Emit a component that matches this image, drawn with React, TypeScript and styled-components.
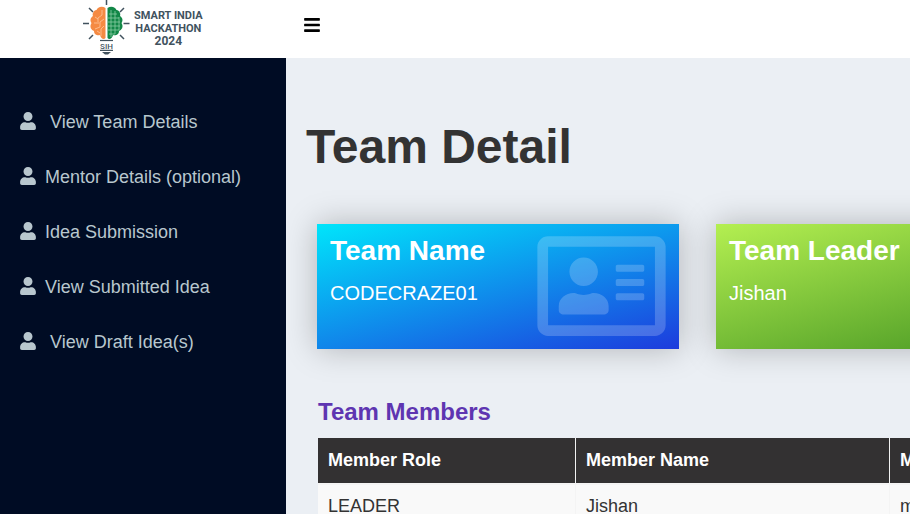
import React from "react";
import styled, { createGlobalStyle } from "styled-components";
import { FaBars, FaRegAddressCard, FaUser } from "react-icons/fa";

const GlobalStyle = createGlobalStyle`
  *, *::before, *::after { box-sizing: border-box; }
  body {
    margin: 0;
    overflow: hidden;
    background: #ebeff4;
    color: #333;
    font-family: "Liberation Sans", Arial, sans-serif;
  }
`;

const Page = styled.div`
  display: flex;
  flex-direction: column;
  height: 100vh;
`;

const TopBar = styled.header`
  display: flex;
  flex: none;
  height: 58px;
  background: #fff;
`;

const Brand = styled.a`
  display: flex;
  flex: none;
  width: 286px;
  padding-left: 80px;
  gap: 4px;
  color: #41525e;
  text-decoration: none;
`;

const BrandName = styled.span`
  display: flex;
  flex-direction: column;
  align-items: center;
  padding-top: 9px;
  font: 700 11px/13px Roboto, sans-serif;
`;

const BrandYear = styled.span`
  font-size: 12px;
`;

const MenuButton = styled.button`
  display: flex;
  align-items: center;
  align-self: flex-start;
  height: 50px;
  margin-left: 18px;
  padding: 0;
  border: 0;
  background: none;
  color: #000;
  font-size: 18px;
  cursor: pointer;

  svg { width: 16px; height: 18px; }
`;

const Body = styled.div`
  display: flex;
  flex: 1;
  min-height: 0;
`;

const Sidebar = styled.nav`
  flex: none;
  width: 286px;
  padding-top: 36px;
  background: #000c24;
`;

const NavList = styled.ul`
  margin: 0;
  padding: 0;
  list-style: none;
`;

const NavLink = styled.a`
  display: flex;
  align-items: flex-start;
  gap: 9px;
  height: 55px;
  padding: 18px 0 0 20px;
  color: #b8c7ce;
  font-size: 18px;
  line-height: 20px;
  text-decoration: none;
  white-space: nowrap;

  svg { width: 16px; height: 18px; }
`;

const Main = styled.main`
  flex: 1;
  min-width: 0;
  padding: 61px 0 0 20px;
  overflow: hidden;
`;

const Title = styled.h1`
  margin: 0;
  font-size: 48px;
  line-height: 56px;
`;

const Cards = styled.section`
  display: grid;
  grid-auto-flow: column;
  grid-auto-columns: 362px;
  gap: 37px;
  margin: 49px 0 0 11px;
`;

const Card = styled.article<{ $from: string; $to: string }>`
  display: flex;
  justify-content: space-between;
  height: 125px;
  padding: 10px 13px;
  background: linear-gradient(165deg, ${(p) => p.$from}, ${(p) => p.$to});
  box-shadow: 0 0 30px rgba(0, 0, 0, 0.25);
  color: #fff;
  white-space: nowrap;

  svg { width: 129px; height: 114px; margin-top: -5px; opacity: 0.2; }
`;

const CardTitle = styled.h2`
  margin: 0;
  font-size: 28px;
  line-height: 34px;
`;

const CardText = styled.p`
  margin: 13px 0 0;
  font-size: 20px;
  line-height: 24px;
`;

const SectionTitle = styled.h3`
  margin: 49px 0 0 12px;
  color: #5e35b1;
  font-size: 24px;
  line-height: 28px;
`;

const Table = styled.table`
  width: 1080px;
  margin: 12px 0 0 12px;
  border-collapse: separate;
  border-spacing: 0;
  table-layout: fixed;
  background: #f9f9f9;
  font-size: 18px;
  line-height: 21px;
  text-align: left;
`;

const Col = styled.col<{ $width?: number }>`
  width: ${(p) => (p.$width ? `${p.$width}px` : "auto")};
`;

const HeadCell = styled.th`
  height: 45px;
  padding: 12px 10px;
  border-right: 1px solid #f2f2f2;
  background: #333132;
  color: #fff;
`;

const Cell = styled.td`
  padding: 11px 10px;
  border-top: 2px solid #f4f4f4;
  border-right: 1px solid #f4f4f4;
`;

const navItems = [
  "\u00a0View Team Details",
  "Mentor Details (optional)",
  "Idea Submission",
  "View Submitted Idea",
  "\u00a0View Draft Idea(s)",
];

const members = [{ role: "LEADER", name: "Jishan", contact: "m" }];

function BulbLogo() {
  return (
    <svg width="50" height="58" viewBox="0 0 50 58" aria-hidden="true">
      <path
        d="M26.5 0v5M3 23.500h6M43.500 23.500h6M9 8l4 4M44 8l-4 4M9 39l4-4M44 39l-4-4"
        stroke="#41525e"
        strokeWidth="1.5"
        fill="none"
      />
      <path
        d="M25.500 8c-4-2.500-8-.5-9 2-3 .5-4.500 4-3.500 6-3 2-3 5-1.500 7-2.500 4 0 7 2.500 8 0 4 4 5 6 4 1 4 4 5 5.500 3z"
        fill="#f58a43"
      />
      <path
        d="M27.500 8c4-2.500 8-.5 9 2 3 .5 4.500 4 3.500 6 3 2 3 5 1.500 7 2.500 4 0 7-2.500 8 0 4-4 5-6 4-1 4-4 5-5.500 3z"
        fill="#128747"
      />
      <path
        d="M22 10v5l-4 3v4M15 17l3 2M24 19l-4 3v5l-5 2M24 26l-3 3v7M17 31l3 2M14 23h5"
        stroke="#ffc69c"
        strokeWidth=".8"
        fill="none"
      />
      <path
        d="M29 14h8M28 18h11M28 22h12M28 26h12M28 30h11M29 34h6M31 10v27M35 11v23M39 17v13"
        stroke="#8bcda5"
        strokeWidth=".8"
        fill="none"
      />
      <path d="M20 40.500h13" stroke="#41525e" strokeWidth="1.2" />
      <text x="26.500" y="48.500" fill="#41525e" fontFamily="Roboto, sans-serif" fontSize="8" fontWeight="500" textAnchor="middle">
        SIH
      </text>
      <path d="M20 49.700h13v1.300H20zM22 52h9l-3 2.500h-3z" fill="#41525e" />
    </svg>
  );
}

export default function App() {
  return (
    <>
      <GlobalStyle />
      <Page>
        <TopBar>
          <Brand href="#">
            <BulbLogo />
            <BrandName>
              <span>SMART INDIA</span>
              <span>HACKATHON</span>
              <BrandYear>2024</BrandYear>
            </BrandName>
          </Brand>
          <MenuButton type="button" aria-label="Toggle menu">
            <FaBars />
          </MenuButton>
        </TopBar>
        <Body>
          <Sidebar>
            <NavList>
              {navItems.map((item) => (
                <li key={item}>
                  <NavLink href="#">
                    <FaUser />
                    <span>{item}</span>
                  </NavLink>
                </li>
              ))}
            </NavList>
          </Sidebar>
          <Main>
            <Title>Team Detail</Title>
            <Cards>
              <Card $from="#00e5fb" $to="#1d3bdd">
                <div>
                  <CardTitle>Team Name</CardTitle>
                  <CardText>CODECRAZE01</CardText>
                </div>
                <FaRegAddressCard />
              </Card>
              <Card $from="#b4ef51" $to="#429321">
                <div>
                  <CardTitle>Team Leader</CardTitle>
                  <CardText>Jishan</CardText>
                </div>
              </Card>
            </Cards>
            <SectionTitle>Team Members</SectionTitle>
            <Table>
              <colgroup>
                <Col $width={258} />
                <Col $width={314} />
                <Col />
              </colgroup>
              <thead>
                <tr>
                  <HeadCell>Member Role</HeadCell>
                  <HeadCell>Member Name</HeadCell>
                  <HeadCell>M</HeadCell>
                </tr>
              </thead>
              <tbody>
                {members.map((m) => (
                  <tr key={m.name}>
                    <Cell>{m.role}</Cell>
                    <Cell>{m.name}</Cell>
                    <Cell>{m.contact}</Cell>
                  </tr>
                ))}
              </tbody>
            </Table>
          </Main>
        </Body>
      </Page>
    </>
  );
}
